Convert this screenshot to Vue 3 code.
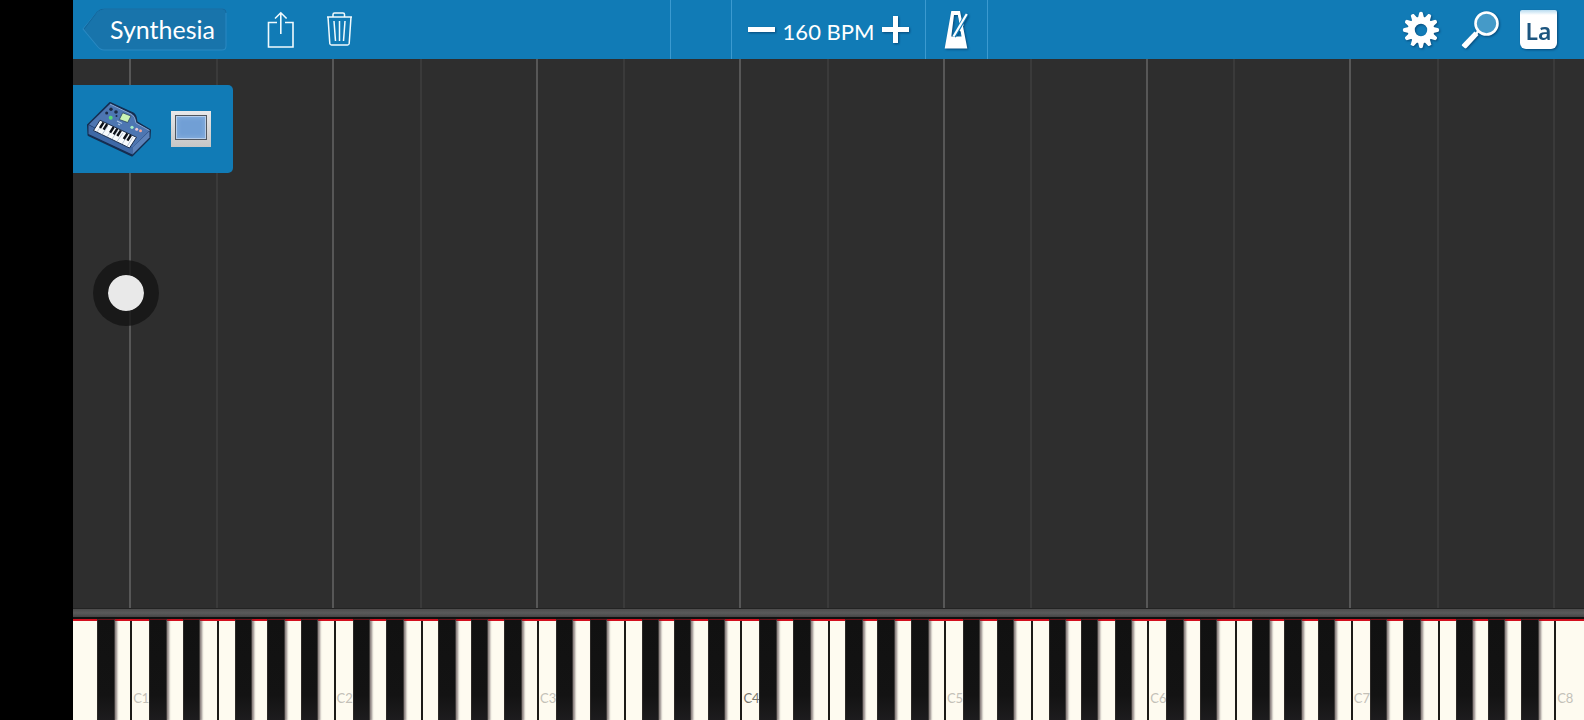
<script setup>
import { ref, computed } from 'vue'

const bpm = ref(160)

// offset of the black key to the right of each note,
// in percent of the white key's width
const blackOffsets = { C: 62, D: 78, F: 57, G: 68, A: 84 }
const notes = ['A', 'B', 'C', 'D', 'E', 'F', 'G']

const keys = computed(() => {
  return Array.from({ length: 52 }, (_, i) => {
    const note = notes[i % 7]
    const octave = Math.floor((i + 5) / 7)
    return {
      id: note + octave,
      note,
      label: note === 'C' ? note + octave : '',
      black: i < 51 && note in blackOffsets ? blackOffsets[note] : null
    }
  })
})

const teeth = Array.from({ length: 12 }, (_, i) => i * 30)

function changeBpm(step) {
  bpm.value = Math.max(10, bpm.value + step)
}
</script>

<template>
  <div class="screen">
    <header class="toolbar">
      <div class="left">
        <button type="button" class="back">
          <svg class="back-shape" viewBox="0 0 144 43" preserveAspectRatio="none" aria-hidden="true">
            <path d="M1 21 L15 4 Q18 1 22 1 H139 Q143 1 143 5 V38 Q143 42 139 42 H22 Q18 42 15 38 Z" fill="#1874ab" stroke="#2a89c2" />
            <path d="M2 21 L15 4 Q18 1 22 1 H139 Q143 1 143 5" fill="none" stroke="#11669b" />
          </svg>
          <span>Synthesia</span>
        </button>
        <button type="button" class="icon share" aria-label="Share">
          <svg width="28" height="38" viewBox="0 0 28 38" fill="none" stroke="#f1fafd" stroke-width="1.6">
            <path d="M10 11.500H1.500V36H26V11.500H18" />
            <path d="M13.800 23V2M8 7.500L13.800 1.800L19.600 7.500" />
          </svg>
        </button>
        <button type="button" class="icon" aria-label="Delete">
          <svg width="28" height="38" viewBox="0 0 28 38" fill="none" stroke="#f1fafd" stroke-width="1.500">
            <path d="M1 6H26M7 6V3.500Q7 2 8.500 2H17Q18.500 2 18.500 3.500V6" />
            <path d="M2 6L3.800 32.500Q4 34 5.500 34H21.500Q23 34 23.200 32.500L25 6" />
            <path d="M8 10L9.500 30M13.500 10V30M19 10L17.500 30" />
          </svg>
        </button>
      </div>

      <div class="tempo">
        <div class="cell"></div>
        <div class="cell bpm">
          <button type="button" aria-label="Slower" @click="changeBpm(-1)">
            <svg class="shadow" width="27" height="27" viewBox="0 0 27 27">
              <rect y="11" width="27" height="5" fill="#fff" />
            </svg>
          </button>
          <span class="bpm-value">{{ bpm }} BPM</span>
          <button type="button" aria-label="Faster" @click="changeBpm(1)">
            <svg class="shadow" width="27" height="27" viewBox="0 0 27 27">
              <path d="M11 0H16V11H27V16H16V27H11V16H0V11H11Z" fill="#fff" />
            </svg>
          </button>
        </div>
        <div class="cell">
          <button type="button" aria-label="Metronome">
            <svg class="shadow" width="24" height="38" viewBox="0 0 24 38">
              <path fill="#fff" fill-rule="evenodd" d="M7.300 0H16L23.300 37.500H0.700ZM10 4L7.300 25.500H17.500L14 4Z" />
              <path d="M14.500 3L18.500 14L16 20" fill="none" stroke="#fff" stroke-width="2" />
              <path d="M10 25.500L22.800 3" stroke="#117bb6" stroke-width="4" />
              <path d="M9.500 25.500L22.800 3" stroke="#fff" stroke-width="2.200" />
            </svg>
          </button>
        </div>
      </div>

      <div class="right">
        <button type="button" aria-label="Settings">
          <svg class="shadow" width="38" height="38" viewBox="-19 -19 38 38">
            <circle r="9.700" fill="none" stroke="#fff" stroke-width="7" />
            <path
              v-for="angle in teeth"
              :key="angle"
              d="M-3.200 -11.500L-1.700 -17.500Q0 -19 1.700 -17.500L3.200 -11.500Z"
              fill="#fff"
              :transform="`rotate(${angle})`"
            />
          </svg>
        </button>
        <button type="button" aria-label="Zoom">
          <svg class="shadow" width="38" height="38" viewBox="0 0 38 38">
            <path d="M1 33.500L13.500 20.500L17.500 24L5.500 37Q4.500 37.800 3.500 37L1 34.800Q0.500 34.200 1 33.500Z" fill="#fff" />
            <path d="M15 23L19 18" stroke="#fff" stroke-width="2.500" />
            <circle cx="25.500" cy="12.500" r="11" fill="#459ac8" stroke="#fff" stroke-width="2.600" />
          </svg>
        </button>
        <button type="button" class="labels shadow">La</button>
      </div>
    </header>

    <main class="roll">
      <div
        v-for="key in keys"
        :key="key.id"
        class="lane"
        :class="{ octave: key.note === 'C' && key.id !== 'C8', half: key.note === 'F' || key.id === 'C8' }"
      ></div>

      <div class="track">
        <button type="button" aria-label="Instrument">
          <svg width="66" height="58" viewBox="0 0 66 58" stroke-linejoin="round">
            <path d="M2 25L24 3L47 13.500Q50 15 50.500 22L64 30L63.500 38L46 55.500L2.500 35Z" fill="#1b3768" stroke="#152d50" stroke-width="2" />
            <path d="M2.500 25L46.500 47.500V54.500L2.500 34Z" fill="#3f69a6" />
            <path d="M46.500 47.500L63.500 31V37.500L46.500 54.500Z" fill="#5d83bb" />
            <path d="M3 24.500L24 4L46 14.500Q49 16 50 23L63.500 30.500L46.500 47.500Z" fill="#4d76b2" />
            <path d="M24 4L46 14.500Q49 16 50 23L63.500 30.500" fill="none" stroke="#8aa8d3" stroke-width="1" />
            <path d="M14 20.200L50.500 37.300L43.500 48L7.500 30.500Z" fill="#f7fafc" stroke="#1b2d4b" stroke-width="1" />
            <path d="M11 32L17 23M16 34.500L22 26M21 37L27 28M26 39L32 30.500M31 41.500L37 33M36 44L42 35M41 46.500L47 37" stroke="#9eafc4" stroke-width="0.700" />
            <path d="M17.600 22.400L14 28M21.200 24L17.600 29.600M27.700 27L24.100 32.600M31.300 28.700L27.700 34.300M34.900 30.300L31.300 36M41.400 33.300L37.800 39M45 35L41.400 40.700" stroke="#0c1018" stroke-width="2.400" />
            <path d="M36.700 12.800L45 16L41.700 22.500L33.300 19.500Z" fill="#c9f3b4" stroke="#29415f" stroke-width="0.800" />
            <g fill="#1b2a44">
              <circle cx="25" cy="9.300" r="1.700" />
              <circle cx="20.700" cy="13" r="1.500" />
              <circle cx="30" cy="12" r="1.800" />
              <circle cx="30.500" cy="16" r="1" />
            </g>
            <circle cx="24.700" cy="17.700" r="2" fill="#58d976" />
            <path d="M31 21L36 23.500M32 24L34 25" stroke="#a9c4e4" stroke-width="1.200" />
            <circle cx="46" cy="27.300" r="1.600" fill="#a5efc4" />
            <circle cx="50.700" cy="29.300" r="1.500" fill="#e9c7d4" />
            <circle cx="54.500" cy="30.700" r="1.500" fill="#f3a89b" />
          </svg>
        </button>
        <button type="button" class="swatch" aria-label="Track colour"><span></span></button>
      </div>

      <div class="touch"></div>
    </main>

    <div class="rail"></div>

    <div class="keyboard">
      <div v-for="key in keys" :key="key.id" class="key" :class="{ edge: key.note === 'C' || key.note === 'F' }">
        <button type="button" class="white" :class="{ middle: key.id === 'C4' }" :aria-label="key.id">{{ key.label }}</button>
        <button
          v-if="key.black !== null"
          type="button"
          class="black"
          :aria-label="key.id + ' sharp'"
          :style="{ left: key.black + '%' }"
        ></button>
      </div>
    </div>
  </div>
</template>

<style>
body {
  margin: 0;
  background: #000;
}
</style>

<style scoped>
.screen {
  box-sizing: border-box;
  display: flex;
  flex-direction: column;
  min-height: 100vh;
  padding-left: 73px;
  overflow: hidden;
  background: #000;
  color: #fff;
  font-family: Lato, "Liberation Sans", sans-serif;
}

button {
  display: block;
  margin: 0;
  padding: 0;
  border: 0;
  background: none;
  color: inherit;
  font: inherit;
  cursor: pointer;
}

svg {
  display: block;
}

.shadow {
  filter: drop-shadow(1px 1px 1px rgba(0, 40, 80, 0.6));
}

.toolbar {
  display: grid;
  grid-template-columns: 1fr 318px 1fr;
  height: 59px;
  background: #117bb6;
}

.left,
.right {
  display: flex;
  align-items: center;
}

.left {
  padding-left: 9px;
}

.back {
  position: relative;
  width: 145px;
  height: 43px;
  padding-left: 28px;
  font-size: 25px;
  line-height: 43px;
  text-align: left;
}

.back-shape {
  position: absolute;
  inset: 0;
  width: 100%;
  height: 100%;
}

.back span {
  position: relative;
}

.icon {
  margin-left: 31px;
}

.share {
  margin-left: 40px;
}

.tempo {
  display: flex;
  border-right: 1px solid #3b9ad0;
}

.cell {
  display: flex;
  flex: 1;
  align-items: center;
  justify-content: center;
  border-left: 1px solid #3b9ad0;
}

.bpm {
  flex: 0 0 194px;
  justify-content: space-between;
  box-sizing: border-box;
  padding: 0 16px;
}

.bpm-value {
  padding-top: 4px;
  font-size: 22px;
  white-space: nowrap;
}

.right {
  justify-content: flex-end;
  gap: 21px;
  padding-right: 27px;
}

.labels {
  width: 37px;
  height: 39px;
  border-radius: 2px 2px 6px 6px;
  background: linear-gradient(#b9dcf0, #fff 5px);
  color: #1c557f;
  font-family: "Noto Sans", sans-serif;
  font-size: 23px;
  font-weight: 600;
  line-height: 42px;
}

.roll {
  position: relative;
  display: flex;
  flex: 1;
  min-height: 300px;
  background: #2e2e2e;
}

.lane {
  flex: 1;
  box-sizing: border-box;
}

.octave,
.half {
  margin-left: -1px;
  margin-right: 1px;
}

.octave {
  border-left: 2px solid #575757;
}

.half {
  border-left: 2px solid #3a3a3a;
}

.track {
  position: absolute;
  top: 26px;
  left: 0;
  display: flex;
  align-items: center;
  gap: 19px;
  box-sizing: border-box;
  height: 88px;
  padding: 0 22px 0 13px;
  border-radius: 0 5px 5px 0;
  background: #117bb6;
}

.swatch {
  box-sizing: border-box;
  width: 40px;
  height: 36px;
  padding: 4px;
  background: linear-gradient(#e8e8ea, #c6c6c6);
}

.swatch span {
  display: block;
  box-sizing: border-box;
  height: 25px;
  margin-bottom: 3px;
  border: 1px solid #50565f;
  background: #719fd5;
  box-shadow: inset 0 0 0 1px #b5cdea, inset 0 0 4px 2px #86aede;
}

.touch {
  position: absolute;
  top: 201px;
  left: 20px;
  box-sizing: border-box;
  width: 66px;
  height: 66px;
  border: 15px solid rgba(20, 20, 20, 0.8);
  border-radius: 50%;
  background: #e9e9e9 padding-box;
}

.rail {
  box-sizing: border-box;
  height: 11px;
  border-top: 1px solid #232323;
  border-bottom: 2px solid #111;
  background: linear-gradient(#4c4c4c, #5a5a5a 50%, #454545);
}

.keyboard {
  display: flex;
  height: 101px;
  background: #171717;
}

.key {
  position: relative;
  display: flex;
  flex: 1;
  min-width: 0;
  box-sizing: border-box;
}

.edge::before {
  position: absolute;
  z-index: 1;
  top: 2px;
  bottom: 0;
  left: -1px;
  width: 2px;
  background: #1d1b18;
  content: "";
}

.white {
  flex: 1;
  min-width: 0;
  padding: 54px 0 0 2px;
  border-top: 2px solid #d3101f;
  background: #fefbf0;
  color: #c4c1b8;
  font-size: 13px;
  line-height: 16px;
  text-align: left;
}

.middle {
  color: #77756d;
}

.black {
  position: absolute;
  z-index: 2;
  top: 0;
  bottom: 0;
  width: 60%;
  border-top: 1px solid #64141a;
  border-right: 1px solid #403d3b;
  border-left: 1px solid #2c2927;
  background: linear-gradient(#111, #131313 75%, #1d1c1e);
  box-shadow: 2px 1px 2px rgba(60, 45, 50, 0.6);
}
</style>
